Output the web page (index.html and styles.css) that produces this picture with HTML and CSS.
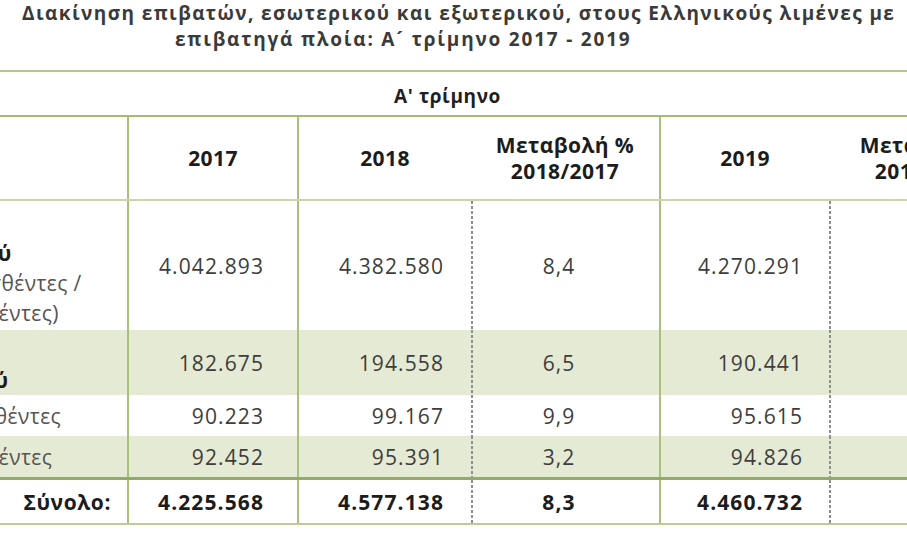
FILE: index.html
```html
<!DOCTYPE html>
<html lang="el">
<head>
<meta charset="utf-8">
<title>Διακίνηση επιβατών</title>
<link rel="stylesheet" href="styles.css">
</head>
<body>
<div class="page">
  <div class="title">
    <div class="t1">Διακίνηση επιβατών, εσωτερικού και εξωτερικού, στους Ελληνικούς λιμένες με</div>
    <div class="t2">επιβατηγά πλοία: Α´ τρίμηνο 2017 - 2019</div>
  </div>
  <div class="grid">
    <div class="period">Α' τρίμηνο</div>
    <div class="row head">
      <div class="cell lab"></div>
      <div class="cell h solid">2017</div>
      <div class="cell h solid">2018</div>
      <div class="cell h">Μεταβολή %<br>2018/2017</div>
      <div class="cell h solid">2019</div>
      <div class="cell h">Μεταβολή %<br>2019/2018</div>
    </div>
    <div class="row r1">
      <div class="cell lab lab-stack"><b>Εσωτερικού</b><span>(Επιβιβασθέντες /</span><span class="ap">Αποβιβασθέντες)</span></div>
      <div class="cell num solid c17">4.042.893</div>
      <div class="cell num solid c18">4.382.580</div>
      <div class="cell pct dash">8,4</div>
      <div class="cell num solid c19">4.270.291</div>
      <div class="cell pct dash"></div>
    </div>
    <div class="row r2 shade">
      <div class="cell lab lab-bottom"><b>Εξωτερικού</b></div>
      <div class="cell num solid c17">182.675</div>
      <div class="cell num solid c18">194.558</div>
      <div class="cell pct dash">6,5</div>
      <div class="cell num solid c19">190.441</div>
      <div class="cell pct dash"></div>
    </div>
    <div class="row r3">
      <div class="cell lab"><span>Επιβιβασθέντες</span></div>
      <div class="cell num solid c17">90.223</div>
      <div class="cell num solid c18">99.167</div>
      <div class="cell pct dash">9,9</div>
      <div class="cell num solid c19">95.615</div>
      <div class="cell pct dash"></div>
    </div>
    <div class="row r4 shade">
      <div class="cell lab"><span class="ap">Αποβιβασθέντες</span></div>
      <div class="cell num solid c17">92.452</div>
      <div class="cell num solid c18">95.391</div>
      <div class="cell pct dash">3,2</div>
      <div class="cell num solid c19">94.826</div>
      <div class="cell pct dash"></div>
    </div>
    <div class="row total">
      <div class="cell lab-total">Σύνολο:</div>
      <div class="cell num solid c17">4.225.568</div>
      <div class="cell num solid c18">4.577.138</div>
      <div class="cell pct dash">8,3</div>
      <div class="cell num solid c19">4.460.732</div>
      <div class="cell pct dash"></div>
    </div>
  </div>
</div>
</body>
</html>
```
FILE: styles.css
```css
* { box-sizing: border-box; margin: 0; padding: 0; }
html, body { background: #ffffff; }
body {
  width: 907px;
  height: 536px;
  overflow: hidden;
  font-family: "Open Sans", "DejaVu Sans", sans-serif;
  color: #3c3c3c;
}
.page { width: 907px; height: 536px; overflow: hidden; }

.title {
  height: 70px;
  padding-top: 0;
  font-weight: 700;
  font-size: 19px;
  line-height: 26px;
  color: #3a3a3a;
  white-space: nowrap;
  letter-spacing: 1.4px;
}
.t1 { padding-left: 22px; }
.t2 { padding-left: 175px; letter-spacing: 1.8px; }

.grid { margin-left: -200px; width: 1229px; }

.period {
  height: 45px;
  border-top: 2px solid #b3c68c;
  display: flex;
  justify-content: center;
  align-items: center;
  padding-left: 66px;
  padding-top: 4px;
  font-weight: 700;
  font-size: 19px;
  letter-spacing: 0.6px;
  color: #1f1f1f;
}

.row {
  display: grid;
  grid-template-columns: 327px 170px 174px 188px 170px 200px;
}
.head { height: 84px; border-top: 2px solid #a4bb74; }
.r1 { height: 131px; border-top: 2px solid #c9d6ab; }
.r2 { height: 65px; }
.r3 { height: 41px; }
.r4 { height: 41px; }
.total { height: 48px; border-top: 3px solid #93ac62; border-bottom: 2px solid #bccb97; }
.shade { background-color: #e5ead5; }

.cell {
  display: flex;
  align-items: center;
  font-size: 21px;
  letter-spacing: 1.1px;
  color: #3d3d3d;
  white-space: nowrap;
}
.solid { border-left: 2px solid #a9bf7b; }
.dash {
  background-image: repeating-linear-gradient(to bottom, #8e8e8e 0 3px, transparent 3px 5px);
  background-size: 2px 100%;
  background-repeat: no-repeat;
  background-position: left top;
}

.h {
  justify-content: center;
  text-align: center;
  font-weight: 700;
  font-size: 21px;
  line-height: 26px;
  letter-spacing: 0.4px;
  color: #1c1c1c;
}
.num { justify-content: flex-end; }
.c17 { padding-right: 33px; }
.c18 { padding-right: 27px; }
.c19 { padding-right: 26px; }
.pct { justify-content: center; padding-right: 12px; }

.lab { padding-left: 100px; color: #555555; letter-spacing: 0.4px; }
.lab b { font-weight: 700; color: #1c1c1c; margin-left: -20px; }
.lab .ap { margin-left: -16px; }
.lab-stack {
  flex-direction: column;
  align-items: flex-start;
  justify-content: flex-end;
  padding-bottom: 2px;
  line-height: 30px;
}
.lab-bottom { align-items: flex-end; padding-bottom: 2px; line-height: 26px; }

.total .cell { font-weight: 700; color: #1c1c1c; letter-spacing: 1.1px; }
.total .lab-total { letter-spacing: 0.6px; }
.lab-total { justify-content: flex-end; padding-right: 16px; }
```
